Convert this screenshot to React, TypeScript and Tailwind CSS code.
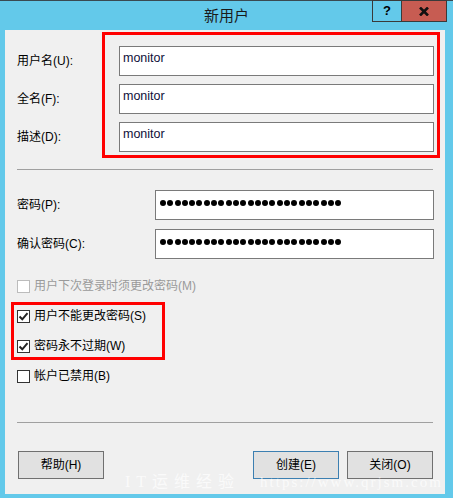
import type { ReactNode } from "react";

const FONT = { fontFamily: '"Liberation Sans", "Noto Sans CJK SC", sans-serif' };

function TextInput({ value }: { value: string }) {
  return (
    <div className="h-[30px] flex-1 border border-[#7a7a7a] bg-white pl-[3px] pt-[3px] text-[12.5px] leading-[17px] text-[#10103a]">
      {value}
    </div>
  );
}

function PasswordInput() {
  return (
    <div className="h-[30px] flex-1 ml-[36px] border border-[#7a7a7a] bg-white pl-[4px] pt-[9px]">
      <div className="flex gap-[1.3px]">
        {Array.from({ length: 25 }).map((_, i) => (
          <span key={i} className="w-[6px] h-[6px] rounded-full bg-black" />
        ))}
      </div>
    </div>
  );
}

function Row({ label, children }: { label: string; children: ReactNode }) {
  return (
    <div className="flex items-center">
      <span className="w-[102px] shrink-0 text-[12px] text-black">{label}</span>
      {children}
    </div>
  );
}

function Check({ label, checked, disabled }: { label: string; checked?: boolean; disabled?: boolean }) {
  return (
    <div className="h-[30px] flex items-center gap-[4px]">
      <span
        className={`w-[13px] h-[13px] bg-white border flex items-center justify-center ${
          disabled ? "border-[#bcbcbc]" : "border-[#333333]"
        }`}
      >
        {checked && (
          <svg width="11" height="11" viewBox="0 0 11 11">
            <path d="M1.5 5.5 L4.3 8.3 L9.5 2.2" fill="none" stroke="#222" strokeWidth="2" />
          </svg>
        )}
      </span>
      <span className={`text-[12px] ${disabled ? "text-[#9a9a9a]" : "text-black"}`}>{label}</span>
    </div>
  );
}

function Btn({ label, focus }: { label: string; focus?: boolean }) {
  return (
    <div
      className={`w-[86px] h-[28px] flex items-center justify-center bg-[#e1e1e1] border text-[12px] text-black ${
        focus ? "border-[#3c7fb1]" : "border-[#707070]"
      }`}
    >
      {label}
    </div>
  );
}

export default function App() {
  return (
    <div className="w-[453px] h-[498px] bg-[#63c9ea] border-t border-[#3a4a52] flex flex-col" style={FONT}>
      {/* title bar */}
      <div className="relative h-[29px] flex items-center justify-center">
        <span className="text-[15px] text-[#1a1a1a] mt-[1px]">新用户</span>
        <div className="absolute right-[6px] top-[-1px] flex">
          <div className="w-[29px] h-[22px] border border-[#3a3a3a] border-r-0 flex items-center justify-center text-[13px] font-bold text-black">
            ?
          </div>
          <div className="w-[46px] h-[22px] border border-[#3a3a3a] bg-[#c75c52] flex items-center justify-center">
            <svg width="10" height="9" viewBox="0 0 10 9">
              <path d="M1 0.5 L9 8.5 M9 0.5 L1 8.5" stroke="#111" strokeWidth="2.6" />
            </svg>
          </div>
        </div>
      </div>

      {/* body */}
      <div className="relative ml-[5px] mr-[8px] h-[464px] bg-[#f0f0f0] pl-[12px] pr-[11px]">
        <div className="pt-[16px] flex flex-col gap-[8px]">
          <Row label="用户名(U):">
            <TextInput value="monitor" />
          </Row>
          <Row label="全名(F):">
            <TextInput value="monitor" />
          </Row>
          <Row label="描述(D):">
            <TextInput value="monitor" />
          </Row>
        </div>

        <div className="mt-[17px] mr-[1px] h-px bg-[#a0a0a0]" />

        <div className="mt-[20px] flex flex-col gap-[9px]">
          <Row label="密码(P):">
            <PasswordInput />
          </Row>
          <Row label="确认密码(C):">
            <PasswordInput />
          </Row>
        </div>

        <div className="mt-[12px] flex flex-col">
          <Check label="用户下次登录时须更改密码(M)" disabled />
          <Check label="用户不能更改密码(S)" checked />
          <Check label="密码永不过期(W)" checked />
          <Check label="帐户已禁用(B)" />
        </div>

        <div className="mt-[31px] mr-[1px] h-px bg-[#a0a0a0]" />

        <div className="mt-[28px] flex pl-[1px]">
          <Btn label="帮助(H)" />
          <div className="ml-auto mr-[1px] flex gap-[8px]">
            <Btn label="创建(E)" focus />
            <Btn label="关闭(O)" />
          </div>
        </div>

        {/* annotation boxes */}
        <div className="absolute left-[97px] top-[2px] w-[338px] h-[126px] border-[3px] border-[#ff0000]" />
        <div className="absolute left-[6px] top-[272px] w-[154px] h-[58px] border-[3px] border-[#ff0000]" />

        {/* watermark */}
        <div
          className="absolute left-[120px] top-[440px] flex items-center gap-[20px] whitespace-nowrap text-white/70 pointer-events-none"
          style={{ fontFamily: '"Liberation Serif", "Noto Sans CJK SC", serif' }}
        >
          <span className="text-[16px] tracking-[6px]">IT运维经验</span>
          <span className="text-[15px] tracking-[2px]">https://www.qrjsm.com</span>
        </div>
      </div>
    </div>
  );
}
